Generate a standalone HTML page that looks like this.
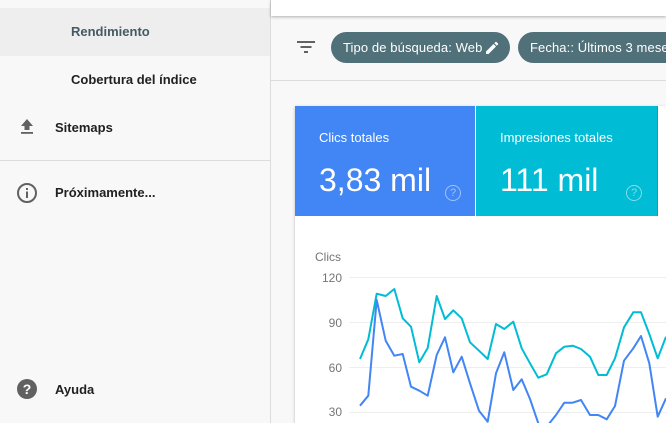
<!DOCTYPE html>
<html><head><meta charset="utf-8"><style>
body{margin:0;width:666px;height:423px;overflow:hidden;background:#f8f8f8;font-family:"Liberation Sans",sans-serif;position:relative}
.sb{position:absolute;left:0;top:0;width:270px;height:423px;background:#f8f8f8;border-right:1px solid #dcdcdc}
.it{position:absolute;font-size:13px;font-weight:bold;color:#212121}
.main{position:absolute;left:271px;top:0;width:395px;height:423px;background:#f8f8f8}
.chip{position:absolute;top:32px;height:31px;border-radius:16px;background:#50707a;color:#fff;font-size:13px;line-height:31px;padding-left:12px;white-space:nowrap;letter-spacing:0.1px}
.card{position:absolute;top:106px;height:110px;color:#fff}
.lbl{position:absolute;left:24px;top:24px;font-size:13px}
.val{position:absolute;left:24px;top:56px;font-size:32px}
.q{position:absolute;top:79px;width:14px;height:14px;border:1.5px solid rgba(255,255,255,.5);border-radius:50%;font-size:11px;line-height:14px;text-align:center;color:rgba(255,255,255,.5)}
</style></head><body>
<div class="sb">
<div style="position:absolute;left:0;top:8px;width:270px;height:48px;background:#eeeeee"></div>
<div class="it" style="left:71px;top:24px;color:#455a64">Rendimiento</div>
<div class="it" style="left:71px;top:72px">Cobertura del índice</div>
<svg style="position:absolute;left:18px;top:118px" width="18" height="18" viewBox="0 0 18 18"><path d="M9 1 L15 8 H11.5 V12 H6.5 V8 H3 Z" fill="#616161"/><rect x="3" y="14" width="12" height="1.8" fill="#616161"/></svg>
<div class="it" style="left:55px;top:120px">Sitemaps</div>
<div style="position:absolute;left:0;top:160px;width:270px;height:1px;background:#dcdcdc"></div>
<svg style="position:absolute;left:16px;top:182px" width="22" height="22" viewBox="0 0 22 22"><circle cx="11" cy="11" r="9" fill="none" stroke="#616161" stroke-width="2"/><rect x="10" y="9.5" width="2" height="6.5" fill="#616161"/><rect x="10" y="6" width="2" height="2" fill="#616161"/></svg>
<div class="it" style="left:55px;top:185px">Próximamente...</div>
<svg style="position:absolute;left:16px;top:378px" width="22" height="22" viewBox="0 0 22 22"><circle cx="11" cy="11" r="10" fill="#616161"/><text x="11" y="16" font-size="14" font-weight="bold" fill="#fff" text-anchor="middle" font-family="Liberation Sans">?</text></svg>
<div class="it" style="left:55px;top:382px">Ayuda</div>
</div>
<div class="main">
<div style="position:absolute;left:0;top:0;width:395px;height:16px;background:#fff;box-shadow:0 1px 3px rgba(0,0,0,.3)"></div>
<svg style="position:absolute;left:26px;top:40px" width="18" height="14" viewBox="0 0 18 14"><rect x="0" y="1" width="18" height="2" fill="#616161"/><rect x="3.5" y="6" width="11" height="2" fill="#616161"/><rect x="7" y="11" width="4" height="2" fill="#616161"/></svg>
<div class="chip" style="left:60px;width:167px">Tipo de búsqueda: Web<svg style="position:absolute;right:11px;top:9px" width="13" height="13" viewBox="0 0 13 13"><path d="M0 10.5V13h2.5L10 5.5 7.5 3z M12 3.5a.7.7 0 000-1L10.5 1a.7.7 0 00-1 0L8.3 2.2l2.5 2.5z" fill="#fff"/></svg></div>
<div class="chip" style="left:247px;width:160px">Fecha:: Últimos 3 meses</div>
<div style="position:absolute;left:0;top:80px;width:395px;height:1px;background:#dcdcdc"></div>
<div style="position:absolute;left:24px;top:106px;width:371px;height:317px;background:#fff;box-shadow:0 1px 3px rgba(0,0,0,.25)"></div>
<div class="card" style="left:24px;width:180px;background:#4285f4"><div class="lbl">Clics totales</div><div class="val">3,83 mil</div><div class="q" style="left:150px">?</div></div>
<div class="card" style="left:205px;width:181px;background:#00bcd4;border-right:1px solid #00a6bb"><div class="lbl">Impresiones totales</div><div class="val">111 mil</div><div class="q" style="left:150px">?</div></div>
</div>
<svg style="position:absolute;left:0;top:0" width="666" height="423">
<g font-family="Liberation Sans" font-size="12" fill="#757575">
<text x="315" y="261">Clics</text>
<text x="342" y="282" text-anchor="end">120</text>
<text x="342" y="327" text-anchor="end">90</text>
<text x="342" y="372" text-anchor="end">60</text>
<text x="342" y="416" text-anchor="end">30</text>
</g>
<g stroke="#eeeeee" stroke-width="1"><line x1="349" y1="277.5" x2="666" y2="277.5"/><line x1="349" y1="322.5" x2="666" y2="322.5"/><line x1="349" y1="367.5" x2="666" y2="367.5"/><line x1="349" y1="412.5" x2="666" y2="412.5"/></g>
<polyline fill="none" stroke="#00bcd4" stroke-width="2" stroke-linejoin="round" points="360,359 368.3,339.3 376.7,293.7 385.7,296 394.3,289 402.7,318.3 411,326.7 419.3,362.3 427.7,348 436.7,296 445,319 453.3,310.3 461.7,318.3 470,342.3 479,350.7 487.7,359 496,324 504.3,329 513.3,321.7 521.7,348.3 530,363.3 538.3,377.7 546.7,374.3 556,353.3 564.3,346.7 572.7,345.7 581,349 590,356.7 598.3,375 606.7,375 615,358.3 624,327.3 633.3,312.3 641,312.3 649.3,334 657.7,358.3 666,336.7"/>
<polyline fill="none" stroke="#4285f4" stroke-width="2" stroke-linejoin="round" points="360,405.7 368.3,395.7 376.7,300 385.7,340.7 394.3,355.7 402.7,354 411,386.7 419.3,390.7 427.7,395.7 436.7,355 445,337.3 453.3,372.3 461.7,356.7 470,383.3 479,410.7 487.7,421.7 496,373.3 504.3,352.3 513.3,390 521.7,379.3 530,399 538.3,423.3 546.7,426.7 556,415 564.3,402.7 572.7,402.7 581,400 590,415 598.3,415 606.7,419.3 615,406 624,360.7 633.3,348.3 641,336 649.3,363.3 657.7,416.7 666,398.3"/>
</svg>
</body></html>
